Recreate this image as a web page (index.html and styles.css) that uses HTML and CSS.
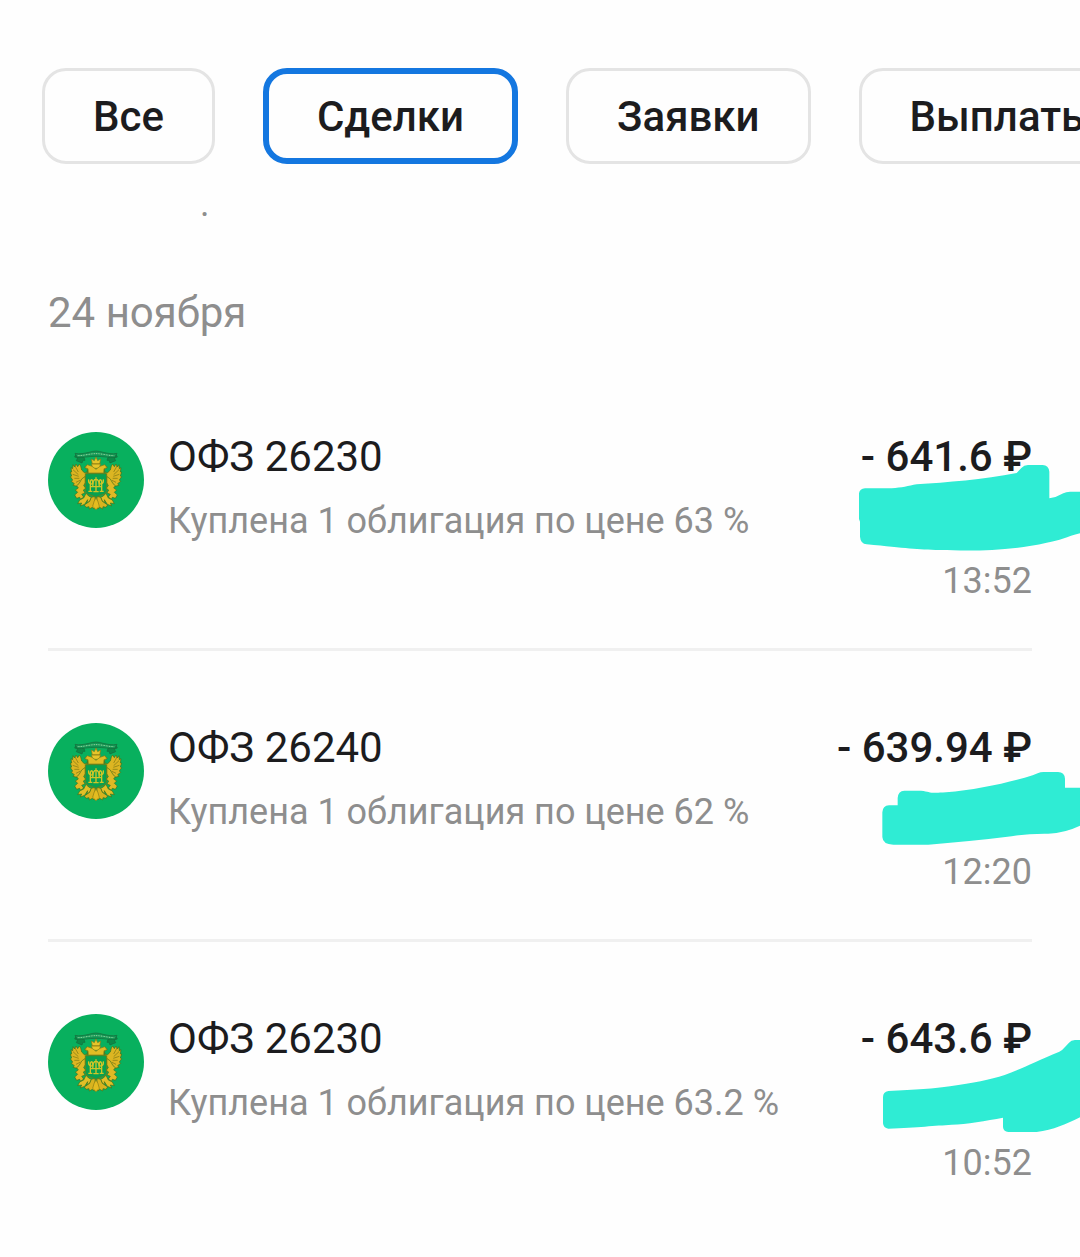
FILE: index.html
```html
<!DOCTYPE html>
<html lang="ru">
<head>
<meta charset="utf-8">
<meta name="viewport" content="width=device-width, initial-scale=1">
<title>Сделки</title>
<link rel="stylesheet" href="styles.css">
</head>
<body>
<svg class="defs" aria-hidden="true">
  <defs>
    <g id="wing" stroke="#3f6f1a" stroke-width="2" stroke-linejoin="round">
      <path fill="#dcb522" d="M150 127l-10-3-6 6 8 4 1 10-10 2-8-8-3-12-4-6-5 8-5-8-4 9-5-7-1 12-5-3 2 13-4 0 4 12-4 2 7 10-4 4 9 7-4 5 12 3 9-3 5-13 8-8 6-7 3-16z"/>
      <path fill="none" stroke="#7a7414" stroke-width="2" d="M105 126l10 18M99 137l16 15M98 151l18 6M103 163l15 0M108 175l12-6"/>
      <path fill="#dfb925" d="M136 157l-11 8-8 14-7 6 5 7-9 6 7 7-9 8 6 10 9-3 3 6 9-7-6-8 10-4-5-9 8-5-7-8 5-9z"/>
      <path fill="#e2bf27" d="M138 208l8 8 8 4-5 12-8 4 2-9-9 14-13 5 4-9-12 2 6-11 12-6z"/>
      <path fill="#d8b31f" d="M165 217l-11 3-5 12-16 11 5 7 9-2 1 7 9-5 5 5 4-9z"/>
      <path fill="#0b8a47" stroke="#176b3b" d="M108 91l-4 8 9 3-4 8 17 7 3-8 6 0-3-9z"/>
    </g>
    <symbol id="emblem" viewBox="24 24 288 288">
      <circle cx="168" cy="168" r="144" fill="#08b05e"/>
      <use href="#wing"/>
      <use href="#wing" transform="matrix(-1 0 0 1 336 0)"/>
      <path fill="#139653" stroke="#176b3b" stroke-width="2" d="M105 88c14 3 28 0 42-3 8-2 14-4 21-4s13 2 21 4c14 3 28 6 42 3l-6 12c-18 2-32-3-57-3s-39 5-57 3z"/>
      <path fill="none" stroke="#9bd8a4" stroke-width="3" stroke-dasharray="3 2" d="M113 95c20 0 35-6 55-6s35 6 55 6"/>
      <path fill="#e6c62b" stroke="#8b7c12" stroke-width="2" d="M154 105l9 5 5-11 5 11 9-5-3 15h-22zM155 119h26l-2 14h-22z"/>
      <path fill="#e0bd24" stroke="#7c7d18" stroke-width="2" d="M156 127l-14-5-7 9 9 3 1 13h46l1-13 9-3-7-9-14 5-12 9z"/>
      <path fill="#07a04f" stroke="#66801c" stroke-width="3" d="M136 149h64v48q-1 14-16 16l-16 7-16-7q-15-2-16-16z"/>
      <path fill="none" stroke="#d0c528" stroke-width="4" d="M168 160v43M160 203h16M151 178v24M185 178v24M145 202h12M179 202h12M146 166c-2 16 12 18 12 8s-8-9-7 6M190 166c2 16-12 18-12 8s8-9 7 6M158 188l2-16q8-14 16 0l2 16M151 188h34"/>
      <path fill="#e4bc20" stroke="#8b7c12" stroke-width="2" d="M168 221l-6 12-4 14 10 10 10-10-4-14z"/>
    </symbol>
  </defs>
</svg>

<nav class="filters" aria-label="Фильтр операций">
  <button class="chip" type="button">Все</button>
  <button class="chip chip-active" type="button" aria-pressed="true">Сделки</button>
  <button class="chip" type="button">Заявки</button>
  <button class="chip" type="button">Выплаты</button>
</nav>

<main>
  <p class="note">.</p>
  <h2 class="date">24 ноября</h2>
  <ul class="deals">
    <li class="deal">
      <svg class="avatar" aria-hidden="true"><use href="#emblem"/></svg>
      <div class="info">
        <h3 class="name">ОФЗ 26230</h3>
        <p class="details">Куплена 1 облигация по цене 63 %</p>
      </div>
      <div class="total">
        <strong class="amount">- 641.6 ₽</strong>
        <time class="time">13:52</time>
      </div>
      <svg class="marker" viewBox="0 6 750 540" aria-hidden="true">
        <path d="M87 190q2-14 18-15h80c30-2 50-7 75-12 90-6 200-14 300-34l14-15q8-9 20-9h44q18 1 20 20v80q22-3 42-15 8-5 20-5h30v125c-40 10-60 22-100 28-120 28-240 24-320 22-70 0-100-6-220-17q-18-1-20-23v-45l-3-8z"/>
      </svg>
    </li>
    <li class="deal">
      <svg class="avatar" aria-hidden="true"><use href="#emblem"/></svg>
      <div class="info">
        <h3 class="name">ОФЗ 26240</h3>
        <p class="details">Куплена 1 облигация по цене 62 %</p>
      </div>
      <div class="total">
        <strong class="amount">- 639.94 ₽</strong>
        <time class="time">12:20</time>
      </div>
      <svg class="marker" viewBox="0 9 750 540" aria-hidden="true">
        <path d="M157 277q1-20 20-21h26v-22q1-21 20-22h50c30 3 20 9 75 5 90-7 190-29 260-51l15-6q8-4 18-4h43q20 1 21 20v27h45v114q-46 22-95 24-60-1-110 8-110 14-250 25h-105q-32-1-33-23z"/>
      </svg>
    </li>
    <li class="deal">
      <svg class="avatar" aria-hidden="true"><use href="#emblem"/></svg>
      <div class="info">
        <h3 class="name">ОФЗ 26230</h3>
        <p class="details">Куплена 1 облигация по цене 63.2 %</p>
      </div>
      <div class="total">
        <strong class="amount">- 643.6 ₽</strong>
        <time class="time">10:52</time>
      </div>
      <svg class="marker" viewBox="0 12 750 540" aria-hidden="true">
        <path d="M159 262q0-17 16-19c80-4 140-7 185-14 70-10 120-20 164-34 45-16 90-40 164-70q10-5 17-14l12-13q6-8 18-8h15v232c-40 20-80 38-130 44h-85q-15-1-16-15v-28c-50 9-110 20-154 21-50 3-100 8-190 12q-15-2-16-16z"/>
      </svg>
    </li>
  </ul>
</main>
</body>
</html>
```
FILE: styles.css
```css
* {
  box-sizing: border-box;
}

body {
  margin: 0;
  background: #fefefe;
  color: #1c1c1e;
  font-family: Roboto, "Noto Sans", sans-serif;
  overflow-x: hidden;
}

h2,
h3,
p,
ul {
  margin: 0;
  padding: 0;
  font-weight: 400;
}

.defs {
  display: block;
  width: 0;
  height: 0;
}

.filters {
  display: flex;
  gap: 48px;
  padding: 68px 0 16px 42px;
  overflow: hidden;
}

.chip {
  flex: none;
  height: 96px;
  padding: 2px 48px 0;
  border: 3px solid #e4e4e4;
  border-radius: 24px;
  background: #fefefe;
  color: inherit;
  font: 500 42px/50px Roboto, "Noto Sans", sans-serif;
}

.chip-active {
  border: 6px solid #1477e0;
}

.note {
  padding-left: 200px;
  color: #8e8e8e;
  font-size: 36px;
  line-height: 48px;
}

.date {
  margin: 60px 48px 22px;
  color: #8e8e8e;
  font-size: 42px;
  line-height: 50px;
}

.deals {
  list-style: none;
}

.deal {
  position: relative;
  display: flex;
  gap: 24px;
  padding: 72px 48px 46px;
}

.deal:not(:last-child)::after {
  content: "";
  position: absolute;
  right: 48px;
  bottom: 0;
  left: 48px;
  height: 3px;
  background: #f0f0f0;
}

.avatar {
  flex: none;
  width: 96px;
  height: 96px;
}

.info {
  flex: 1;
}

.name {
  font-size: 42px;
  line-height: 50px;
}

.details {
  margin-top: 15px;
  color: #8e8e8e;
  font-size: 36px;
  line-height: 48px;
}

.total {
  display: flex;
  flex-direction: column;
  gap: 75px;
  text-align: right;
}

.amount {
  font-size: 42px;
  font-weight: 500;
  line-height: 50px;
}

.time {
  color: #8e8e8e;
  font-size: 36px;
  line-height: 48px;
}

.marker {
  position: absolute;
  top: 72px;
  right: 0;
  width: 250px;
  height: 180px;
  fill: #2fecd4;
}
```
